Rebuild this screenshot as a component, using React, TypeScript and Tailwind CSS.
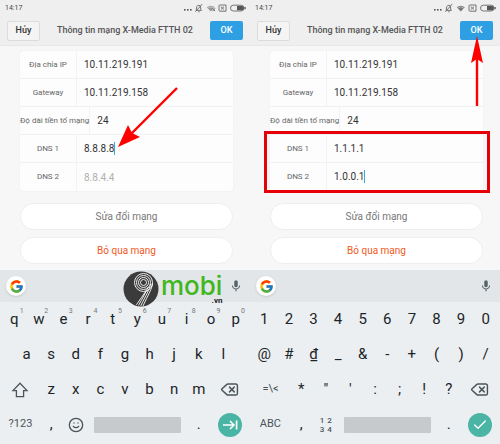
import { useState } from "react"
import type { ReactNode } from "react"
import { Check, Delete, Smile } from "lucide-react"
import { FcGoogle } from "react-icons/fc"
import { MdMic } from "react-icons/md"

type Field = {
  id: string
  label: string
  value: string
  placeholder?: string
  focused?: boolean
}

type Key = { char: string; hint?: string }

const network: Field[] = [
  { id: "ip", label: "Địa chỉa IP", value: "10.11.219.191" },
  { id: "gateway", label: "Gateway", value: "10.11.219.158" },
  { id: "prefix", label: "Độ dài tiền tố mạng", value: "24" },
]

const topLetters: Key[] = [..."qwertyuiop"].map((char, i) => ({
  char,
  hint: String((i + 1) % 10),
}))
const toKeys = (chars: string): Key[] => [...chars].map((char) => ({ char }))

function StatusBar({ weak }: { weak?: boolean }) {
  return (
    <div className="flex h-4 items-center justify-between pl-[5px] pr-1 text-[7px] text-[#444]">
      <span>14:17</span>
      <svg viewBox="0 0 64 10" className="h-[10px] w-16" fill="none" stroke="#666" strokeWidth="0.9">
        <g fill="#555" stroke="none">
          <rect x="2" y="6" width="1.6" height="1.6" />
          <rect x="5" y="6" width="1.6" height="1.6" />
          <rect x="8" y="6" width="1.6" height="1.6" />
        </g>
        <path d="M14 7.4h5.4l-.8-1.4V4a2 2 0 0 0-3.8-.5L14.4 6zM16.2 8.8h1.5M13.4 8.8l6.8-7.8" />
        <path d="M24.8 4.2q4-3 8 0L28.8 8.4z" fill={weak ? "#999" : "#777"} stroke="none" />
        {weak && <path d="M30.6 5.2l2.4 2.9M30.6 8.1 33 5.2" />}
        <path d="M25.4 5.2q3.4-2.6 6.8 0" stroke="#eee" strokeWidth="0.5" />
        <path d="M37.5 2h6.5v6.2h-6.5l-.5-.8V2.6zM38.8 3.6l3.2 3M42 3.6l-3.2 3" />
        <rect x="48.5" y="2.2" width="13.5" height="5.8" rx="2.9" />
        <path d="M55 3h4.8a2.1 2.1 0 0 1 0 4.2H55zM62.4 4h1.3v2.2h-1.3z" fill="#555" stroke="none" />
      </svg>
    </div>
  )
}

function Header() {
  return (
    <header className="flex h-[30px] items-center justify-between border-b border-[#e8e8e8] px-[7px]">
      <button
        type="button"
        className="h-5 w-[33px] rounded-[2px] border border-[#dcdcdc] bg-[#f4f4f4] text-[9px] font-medium text-[#333]"
      >
        Hủy
      </button>
      <h1 className="text-[9px] font-medium text-[#555]">Thông tin mạng X-Media FTTH 02</h1>
      <button
        type="button"
        className="h-[19px] w-[33px] rounded-[2px] bg-[#2f9fe4] text-[9px] font-medium text-white"
      >
        OK
      </button>
    </header>
  )
}

function FieldRow({ prefix, field }: { prefix: string; field: Field }) {
  const [value, setValue] = useState(field.value)
  const id = `${prefix}-${field.id}`

  return (
    <div className="flex h-7 items-center border-b border-[#f1f1f1] last:border-b-0">
      <label
        htmlFor={id}
        className="flex h-full min-w-[57px] shrink-0 items-center justify-center whitespace-nowrap border-r border-[#f3f3f3] text-[8px] text-[#666]"
      >
        {field.label}
      </label>
      <div className="flex min-w-0 flex-1 items-center pl-[7px]">
        <input
          id={id}
          value={value}
          placeholder={field.placeholder}
          onChange={(e) => setValue(e.target.value)}
          className="field-sizing-content min-w-0 bg-transparent text-[10px] text-[#333] caret-[#3ba7d8] outline-none placeholder:text-[#b0b0b0]"
        />
        {field.focused && <span className="h-[13px] w-px shrink-0 bg-[#3ba7d8]" />}
      </div>
    </div>
  )
}

function NetworkForm({ prefix, dns, highlight }: { prefix: string; dns: Field[]; highlight?: boolean }) {
  return (
    <main className="bg-[#f7f7f7] pb-[6px] pl-5 pr-[17px] pt-[5px]">
      <div className="rounded-[3px] bg-[#fdfdfd] shadow-[0_0_1px_#ddd]">
        {network.map((field) => (
          <FieldRow key={field.id} prefix={prefix} field={field} />
        ))}
        <div className="relative">
          {dns.map((field) => (
            <FieldRow key={field.id} prefix={prefix} field={field} />
          ))}
          {highlight && (
            <div className="pointer-events-none absolute -bottom-[2px] -left-[6px] -right-[7px] -top-1 border-[3px] border-[#e60008]" />
          )}
        </div>
      </div>
      <div className="mt-3 flex flex-col gap-[7px]">
        <button type="button" className="h-[27px] rounded-full border border-[#eee] bg-white text-[10px] text-[#777]">
          Sửa đổi mạng
        </button>
        <button type="button" className="h-[27px] rounded-full border border-[#eee] bg-white text-[10px] text-[#f0591e]">
          Bỏ qua mạng
        </button>
      </div>
    </main>
  )
}

function KeyRow({ keys }: { keys: Key[] }) {
  return keys.map(({ char, hint }) => (
    <button
      key={char}
      type="button"
      className="relative flex h-full min-w-0 flex-[2] items-center justify-center text-[15px] text-[#1b2529]"
    >
      {char}
      {hint && <sup className="absolute right-[3px] top-[6px] text-[7px] leading-none text-[#777]">{hint}</sup>}
    </button>
  ))
}

function WideKey({ label, children }: { label: string; children: ReactNode }) {
  return (
    <button
      type="button"
      aria-label={label}
      className="flex h-full min-w-0 flex-[3] items-center justify-center text-[11px] text-[#4b5559]"
    >
      {children}
    </button>
  )
}

function Keyboard({
  rows,
  left,
  mode,
  extra,
  enter,
}: {
  rows: [Key[], Key[], Key[]]
  left: ReactNode
  mode: string
  extra: ReactNode
  enter: ReactNode
}) {
  return (
    <section aria-label="Keyboard" className="bg-[#ebeff2] pb-[2px]">
      <div className="flex h-8 items-center justify-between bg-[#e2e6e9] pl-[6px] pr-[7px]">
        <button
          type="button"
          aria-label="Google"
          className="flex size-5 items-center justify-center rounded-full bg-white shadow-sm"
        >
          <FcGoogle size={15} />
        </button>
        <button type="button" aria-label="Voice">
          <MdMic size={14} color="#56646a" />
        </button>
      </div>
      <div className="px-[2px]">
        <div className="flex h-[35px]">
          <KeyRow keys={rows[0]} />
        </div>
        <div className="flex h-[35px]">
          {rows[1].length < 10 && <span className="flex-1" />}
          <KeyRow keys={rows[1]} />
          {rows[1].length < 10 && <span className="flex-1" />}
        </div>
        <div className="flex h-[35px]">
          {left}
          <KeyRow keys={rows[2]} />
          <WideKey label="Backspace">
            <Delete size={19} strokeWidth={1.8} />
          </WideKey>
        </div>
        <div className="flex h-[35px] items-center">
          <WideKey label={mode}>{mode}</WideKey>
          <KeyRow keys={toKeys(",")} />
          <button
            type="button"
            aria-label="More"
            className="flex h-full min-w-0 flex-[2] items-center justify-center text-[#4b5559]"
          >
            {extra}
          </button>
          <span className="flex min-w-0 flex-[8]">
            <button type="button" aria-label="Space" className="mx-[6px] h-4 flex-1 rounded-[1px] bg-[#c7cacd]" />
          </span>
          <KeyRow keys={toKeys(".")} />
          <WideKey label="Enter">
            <span className="flex size-6 shrink-0 items-center justify-center rounded-full bg-[#4bb5a5] text-white">
              {enter}
            </span>
          </WideKey>
        </div>
      </div>
    </section>
  )
}

function Logo() {
  return (
    <div className="pointer-events-none absolute left-[123px] top-px flex items-start">
      <svg viewBox="0 0 36 36" className="size-9" fill="none" stroke="#fff" strokeWidth="0.9">
        <circle cx="18" cy="18" r="17.5" fill="#3b3b3b" stroke="none" />
        <circle cx="20.5" cy="11.5" r="3" />
        <circle cx="20.5" cy="11.5" r="5" />
        <circle cx="20.5" cy="11.5" r="7" />
        <circle cx="20.5" cy="11.5" r="9" />
        <path d="M29.5 12C29.5 17 25 24 20 35M27.5 13C27 18 22.5 25 17.8 34.8M25.2 16C23 21 19 28 15.6 34.4M23.4 19.4C20 24 17 29 13.4 33.8" />
      </svg>
      <div className="ml-[2px] flex flex-col items-end font-['Inter',sans-serif] text-[26px] font-medium leading-[29px] text-[#41b71e]">
        mobi
        <span className="-mt-[3px] font-['Roboto',sans-serif] text-[8px] font-bold leading-[8px] text-[#222]">.vn</span>
      </div>
    </div>
  )
}

export default function App() {
  return (
    <div className="grid grid-cols-2 bg-[#efeff0] font-['Roboto',sans-serif]">
      <div className="relative min-w-0">
        <StatusBar weak />
        <Header />
        <NetworkForm
          prefix="before"
          dns={[
            { id: "dns1", label: "DNS 1", value: "8.8.8.8", focused: true },
            { id: "dns2", label: "DNS 2", value: "", placeholder: "8.8.4.4" },
          ]}
        />
        <div className="relative">
          <Keyboard
            rows={[topLetters, toKeys("asdfghjkl"), toKeys("zxcvbnm")]}
            left={
              <WideKey label="Shift">
                <svg viewBox="0 0 18 18" className="size-[18px]" fill="none" stroke="currentColor" strokeWidth="1.3">
                  <path d="M9 2.2 2 9.6h3.4v6h7.2v-6H16z" />
                </svg>
              </WideKey>
            }
            mode="?123"
            extra={<Smile size={16} strokeWidth={2} />}
            enter={
              <svg viewBox="0 0 16 12" className="h-3 w-4" fill="none" stroke="currentColor" strokeWidth="1.6">
                <path d="M1 6h11M8 2l4 4-4 4M14.6 1.5v9" />
              </svg>
            }
          />
          <Logo />
        </div>
        <svg viewBox="0 0 64 64" className="pointer-events-none absolute left-[116px] top-[86px] size-16">
          <path d="M61 2 15 48" stroke="#f00" strokeWidth="2.4" />
          <path d="M2 61 12 39l4 8 8 4z" fill="#f00" />
        </svg>
      </div>

      <div className="relative min-w-0">
        <StatusBar />
        <Header />
        <NetworkForm
          prefix="after"
          highlight
          dns={[
            { id: "dns1", label: "DNS 1", value: "1.1.1.1" },
            { id: "dns2", label: "DNS 2", value: "1.0.0.1", focused: true },
          ]}
        />
        <Keyboard
          rows={[toKeys("1234567890"), toKeys("@#₫_&-+()/"), toKeys("*\"':;!?")]}
          left={<WideKey label="Symbols">=\&lt;</WideKey>}
          mode="ABC"
          extra={
            <span className="grid grid-cols-2 gap-x-[3px] text-[8px] font-medium leading-[9px]">
              <span>1</span>
              <span>2</span>
              <span>3</span>
              <span>4</span>
            </span>
          }
          enter={<Check size={16} strokeWidth={2} />}
        />
        <svg viewBox="0 0 14 70" className="pointer-events-none absolute right-4 top-9 h-[70px] w-[14px]">
          <path d="M7 70V20" stroke="#f00" strokeWidth="2.4" />
          <path d="M7 0 13 27 7 23 1 27z" fill="#f00" />
        </svg>
      </div>
    </div>
  )
}
